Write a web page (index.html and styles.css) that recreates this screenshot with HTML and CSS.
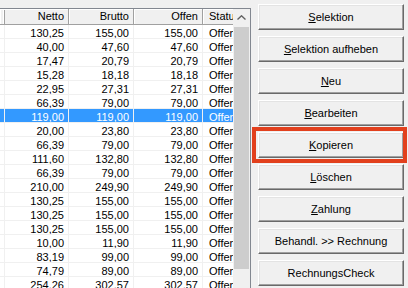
FILE: index.html
```html
<!DOCTYPE html>
<html lang="de">
<head>
<meta charset="utf-8">
<title>Rechnungen</title>
<link rel="stylesheet" href="styles.css">
</head>
<body>
<div class="window">
  <div class="list">
    <div class="grid">
      <div class="row head"><span></span><span>Netto</span><span>Brutto</span><span>Offen</span><span class="st">Status</span></div>
      <div class="row"><span></span><span>130,25</span><span>155,00</span><span>155,00</span><span class="st">Offen</span></div>
      <div class="row"><span></span><span>40,00</span><span>47,60</span><span>47,60</span><span class="st">Offen</span></div>
      <div class="row"><span></span><span>17,47</span><span>20,79</span><span>20,79</span><span class="st">Offen</span></div>
      <div class="row"><span></span><span>15,28</span><span>18,18</span><span>18,18</span><span class="st">Offen</span></div>
      <div class="row"><span></span><span>22,95</span><span>27,31</span><span>27,31</span><span class="st">Offen</span></div>
      <div class="row"><span></span><span>66,39</span><span>79,00</span><span>79,00</span><span class="st">Offen</span></div>
      <div class="row sel"><span></span><span>119,00</span><span>119,00</span><span>119,00</span><span class="st">Offen</span></div>
      <div class="row"><span></span><span>20,00</span><span>23,80</span><span>23,80</span><span class="st">Offen</span></div>
      <div class="row"><span></span><span>66,39</span><span>79,00</span><span>79,00</span><span class="st">Offen</span></div>
      <div class="row"><span></span><span>111,60</span><span>132,80</span><span>132,80</span><span class="st">Offen</span></div>
      <div class="row"><span></span><span>66,39</span><span>79,00</span><span>79,00</span><span class="st">Offen</span></div>
      <div class="row"><span></span><span>210,00</span><span>249,90</span><span>249,90</span><span class="st">Offen</span></div>
      <div class="row"><span></span><span>130,25</span><span>155,00</span><span>155,00</span><span class="st">Offen</span></div>
      <div class="row"><span></span><span>130,25</span><span>155,00</span><span>155,00</span><span class="st">Offen</span></div>
      <div class="row"><span></span><span>130,25</span><span>155,00</span><span>155,00</span><span class="st">Offen</span></div>
      <div class="row"><span></span><span>10,00</span><span>11,90</span><span>11,90</span><span class="st">Offen</span></div>
      <div class="row"><span></span><span>83,19</span><span>99,00</span><span>99,00</span><span class="st">Offen</span></div>
      <div class="row"><span></span><span>74,79</span><span>89,00</span><span>89,00</span><span class="st">Offen</span></div>
      <div class="row"><span></span><span>254,26</span><span>302,57</span><span>302,57</span><span class="st">Offen</span></div>
    </div>
    <div class="vscroll">
      <div class="up"><svg width="9" height="5" viewBox="0 0 9 5"><polyline points="0.5,4.5 4.5,0.8 8.5,4.5" fill="none" stroke="#606060" stroke-width="1.4"/></svg></div>
      <div class="thumb"></div>
    </div>
  </div>
  <div class="buttons">
    <button type="button" class="btn"><u>S</u>elektion</button>
    <button type="button" class="btn"><u>S</u>elektion aufheben</button>
    <button type="button" class="btn"><u>N</u>eu</button>
    <button type="button" class="btn"><u>B</u>earbeiten</button>
    <button type="button" class="btn"><u>K</u>opieren</button>
    <button type="button" class="btn"><u>L</u>öschen</button>
    <button type="button" class="btn"><u>Z</u>ahlung</button>
    <button type="button" class="btn">Behandl. &gt;&gt; Rechnung</button>
    <button type="button" class="btn">RechnungsCheck</button>
  </div>
</div>
<div class="highlight"></div>
</body>
</html>
```

FILE: styles.css
```css
* { box-sizing: border-box; }
html, body { margin: 0; padding: 0; }
body {
  width: 408px;
  height: 288px;
  overflow: hidden;
  position: relative;
  background: #f0f0f0;
  font-family: "Liberation Sans", Arial, sans-serif;
  font-size: 11px;
  color: #000;
}
.window {
  display: flex;
  height: 288px;
}
.list {
  flex: none;
  width: 251px;
  margin-top: 8px;
  border-top: 1px solid #828790;
  border-right: 1px solid #828790;
  background: #fff;
  display: flex;
  overflow: hidden;
}
.grid {
  width: 233px;
  overflow: hidden;
  flex: none;
}
.row {
  display: grid;
  grid-template-columns: 3px 66px 65px 69px 60px;
  width: 263px;
  height: 14px;
  border-bottom: 1px solid #f0f0f0;
}
.row > span {
  height: 13px;
  line-height: 16px;
  overflow: hidden;
  white-space: nowrap;
  text-align: right;
  padding-right: 4px;
  border-right: 1px solid #f0f0f0;
}
.row > span.st {
  text-align: left;
  padding-left: 6px;
  padding-right: 0;
}
.row.head {
  height: 16px;
  background: #f0f0f0;
  border-bottom: 1px solid #a0a0a0;
}
.row.head > span {
  height: 15px;
  line-height: 15px;
  border-right: 1px solid #a0a0a0;
  box-shadow: inset 1px 1px #ffffff;
}
.row.sel {
  background: #3399ff;
  color: #fff;
}
.vscroll {
  flex: none;
  width: 17px;
  background: #f0f0f0;
  display: flex;
  flex-direction: column;
}
.up {
  height: 17px;
  display: flex;
  align-items: center;
  justify-content: center;
}
.up svg { display: block; }
.thumb {
  margin: 1px 1px 0 1px;
  height: 242px;
  background: #cdcdcd;
}
.buttons {
  flex: none;
  width: 146px;
  margin-left: 7px;
  padding-top: 4px;
  display: flex;
  flex-direction: column;
  gap: 6px;
}
.btn {
  height: 26px;
  margin: 0;
  padding: 0;
  display: flex;
  align-items: center;
  justify-content: center;
  background: #f0f0f0;
  border: 1px solid;
  border-color: #ffffff #696969 #696969 #ffffff;
  box-shadow: inset -1px -1px #a0a0a0, inset 1px 1px #e3e3e3;
  font-family: "Liberation Sans", Arial, sans-serif;
  font-size: 11px;
  color: #000;
  white-space: nowrap;
}
.highlight {
  position: absolute;
  left: 252px;
  top: 127px;
  width: 155px;
  height: 36px;
  border: 4px solid #e2401d;
}
```
